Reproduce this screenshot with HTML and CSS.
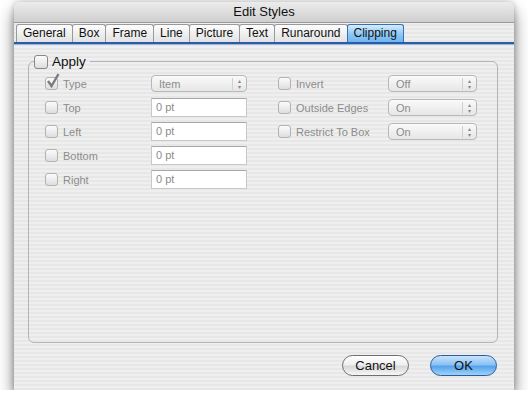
FILE: index.html
```html
<!DOCTYPE html>
<html lang="en">
<head>
    <meta charset="UTF-8">
    <title>Edit Styles</title>
    <link rel="stylesheet" href="styles.css">
</head>
<body>
    <div class="window">
        <div class="titlebar">Edit Styles</div>
        <div class="tabs">
            <div class="tab">General</div>
            <div class="tab">Box</div>
            <div class="tab">Frame</div>
            <div class="tab">Line</div>
            <div class="tab">Picture</div>
            <div class="tab">Text</div>
            <div class="tab">Runaround</div>
            <div class="tab selected">Clipping</div>
        </div>
        <div class="tabline"></div>

        <div class="content">
            <fieldset class="group">
                <legend class="apply"><span class="check big"></span>Apply</legend>
                <div class="columns">
                    <div class="col left">
                        <div class="row">
                            <span class="label"><span class="check on"><svg width="14" height="16" viewBox="0 0 14 16"><path d="M2 8 L5.5 13 L12.5 1" fill="none" stroke="#7c7c7c" stroke-width="2.4"/></svg></span>Type</span>
                            <span class="popup"><span class="val">Item</span><span class="arrows">▴<br>▾</span></span>
                        </div>
                        <div class="row">
                            <span class="label"><span class="check"></span>Top</span>
                            <span class="field">0 pt</span>
                        </div>
                        <div class="row">
                            <span class="label"><span class="check"></span>Left</span>
                            <span class="field">0 pt</span>
                        </div>
                        <div class="row">
                            <span class="label"><span class="check"></span>Bottom</span>
                            <span class="field">0 pt</span>
                        </div>
                        <div class="row">
                            <span class="label"><span class="check"></span>Right</span>
                            <span class="field">0 pt</span>
                        </div>
                    </div>
                    <div class="col right">
                        <div class="row">
                            <span class="label"><span class="check"></span>Invert</span>
                            <span class="popup"><span class="val">Off</span><span class="arrows">▴<br>▾</span></span>
                        </div>
                        <div class="row">
                            <span class="label"><span class="check"></span>Outside Edges</span>
                            <span class="popup"><span class="val">On</span><span class="arrows">▴<br>▾</span></span>
                        </div>
                        <div class="row">
                            <span class="label"><span class="check"></span>Restrict To Box</span>
                            <span class="popup"><span class="val">On</span><span class="arrows">▴<br>▾</span></span>
                        </div>
                    </div>
                </div>
            </fieldset>

            <div class="buttons">
                <div class="button">Cancel</div>
                <div class="button default">OK</div>
            </div>
        </div>
    </div>
</body>
</html>
```

FILE: styles.css
```css
body {
    margin: 0;
    padding: 2px 0 0 14px;
    background-color: #fff;
    font-family: "Liberation Sans", Arial, sans-serif;
}

.window {
    width: 500px;
    height: 388px;
    border-radius: 6px 6px 0 0;
    background: repeating-linear-gradient(to bottom, #efefef 0, #efefef 2px, #e7e7e7 2px, #e7e7e7 4px);
    box-shadow: 0 9px 16px rgba(0, 0, 0, 0.5), 0 0 6px rgba(0, 0, 0, 0.25);
    display: flex;
    flex-direction: column;
}

.titlebar {
    height: 20px;
    line-height: 20px;
    text-align: center;
    font-size: 13px;
    color: #111;
    border-radius: 6px 6px 0 0;
    background: linear-gradient(to bottom, #ececec, #cfcfcf);
    border-bottom: 1px solid #999;
}

.tabs {
    display: flex;
    padding: 1px 0 0 2px;
    height: 18px;
}

.tab {
    height: 17px;
    line-height: 17px;
    padding: 0 6px;
    font-size: 12px;
    color: #111;
    border: 1px solid #999;
    border-bottom: none;
    border-radius: 3px 3px 0 0;
    background: linear-gradient(to bottom, #fdfdfd, #e2e2e2);
    margin-right: -1px;
}

.tab.selected {
    border-color: #3b6db6;
    background: linear-gradient(to bottom, #d6ecfc, #8cc7f6 55%, #6fb5f0);
    z-index: 1;
}

.tabline {
    height: 2px;
    background: #2a5caa;
    border-bottom: 1px solid #9bb7dd;
}

.content {
    flex: 1;
    padding: 9px 16px 0 14px;
    display: flex;
    flex-direction: column;
}

.group {
    margin: 0;
    padding: 0 0 0 16px;
    height: 289px;
    border: 1px solid #b4b4b4;
    border-radius: 6px;
    box-sizing: border-box;
    min-width: 0;
}

.apply {
    padding: 0 4px 0 0;
    margin-left: -11px;
    font-size: 13.5px;
    color: #111;
    display: flex;
    align-items: center;
}

.apply .check {
    margin-right: 4px;
}

.columns {
    display: flex;
    padding-top: 5px;
}

.col {
    display: flex;
    flex-direction: column;
    gap: 5px;
}

.col.left {
    width: 233px;
}

.row {
    display: flex;
    align-items: center;
    height: 19px;
}

.label {
    display: flex;
    align-items: center;
    font-size: 11px;
    color: #8c8c8c;
}

.col.left .label {
    width: 106px;
}

.col.right .label {
    width: 110px;
}

.check {
    width: 11px;
    height: 11px;
    border: 1px solid #b2b2b2;
    border-radius: 3px;
    background: linear-gradient(to bottom, #fbfbfb, #dedede);
    margin-right: 5px;
    position: relative;
}

.check.big {
    width: 12px;
    height: 12px;
    border-color: #888;
}

.check svg {
    position: absolute;
    left: 0;
    top: -5px;
}

.popup {
    box-sizing: border-box;
    height: 17px;
    border: 1px solid #b8b8b8;
    border-radius: 4px;
    background: linear-gradient(to bottom, #fafafa, #e6e6e6);
    display: flex;
    align-items: center;
    font-size: 11px;
    color: #8c8c8c;
}

.col.left .popup {
    width: 96px;
}

.col.right .popup {
    width: 89px;
}

.popup .val {
    flex: 1;
    padding-left: 7px;
}

.popup .arrows {
    width: 13px;
    border-left: 1px solid #cfcfcf;
    font-size: 6px;
    line-height: 6px;
    text-align: center;
    color: #888;
}

.field {
    box-sizing: border-box;
    width: 96px;
    height: 19px;
    line-height: 17px;
    padding-left: 4px;
    background: #fff;
    border: 1px solid #c8c8c8;
    border-top-color: #a8a8a8;
    font-size: 11px;
    color: #8c8c8c;
}

.buttons {
    display: flex;
    justify-content: flex-end;
    gap: 21px;
    padding: 12px 1px 0 0;
}

.button {
    box-sizing: border-box;
    width: 67px;
    height: 21px;
    line-height: 19px;
    text-align: center;
    font-size: 13px;
    color: #111;
    border: 1px solid #6e6e6e;
    border-radius: 11px;
    background: linear-gradient(to bottom, #ffffff, #f0f0f0 45%, #d8d8d8 55%, #f6f6f6);
}

.button.default {
    border-color: #2c5c9c;
    background: linear-gradient(to bottom, #c9e3fb, #8ac2f3 45%, #56a3ec 55%, #9fd2fb);
}
```
